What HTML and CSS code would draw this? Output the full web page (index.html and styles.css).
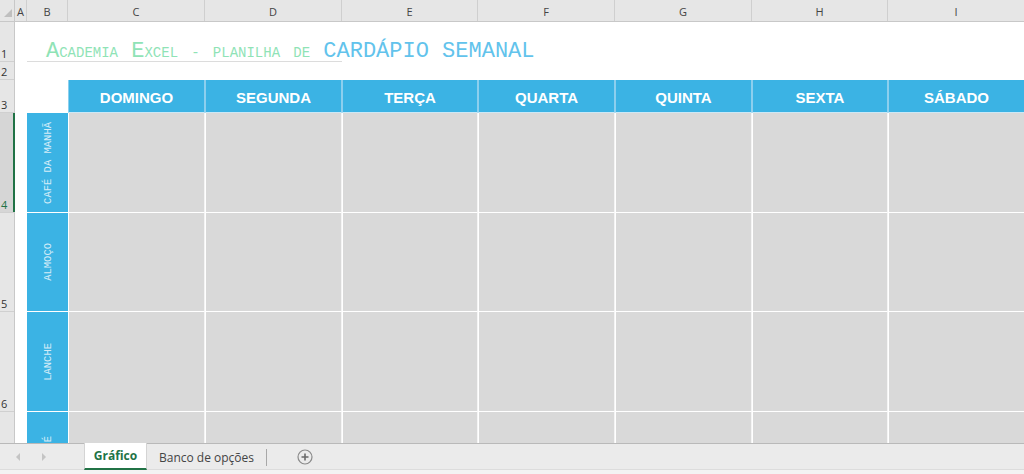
FILE: index.html
```html
<!DOCTYPE html>
<html lang="pt">
<head>
<meta charset="utf-8">
<title>Cardápio Semanal</title>
<link rel="stylesheet" href="styles.css">
</head>
<body>
<div class="app">
  <div class="colheads">
    <div class="ch corner">
      <svg width="10" height="10" viewBox="0 0 10 10"><polygon points="9,1 9,9 1,9" fill="#bfbfbf"/></svg>
    </div>
    <div class="ch w-a">A</div>
    <div class="ch w-b">B</div>
    <div class="ch w-137">C</div>
    <div class="ch w-137">D</div>
    <div class="ch w-136">E</div>
    <div class="ch w-137">F</div>
    <div class="ch w-137">G</div>
    <div class="ch w-136">H</div>
    <div class="ch w-rest">I</div>
  </div>
  <div class="main">
    <div class="rowheads">
      <div class="rh r1">1</div>
      <div class="rh r2">2</div>
      <div class="rh r3">3</div>
      <div class="rh r4 selected">4</div>
      <div class="rh r5">5</div>
      <div class="rh r6">6</div>
      <div class="rh r7">7</div>
    </div>
    <div class="sheet">
      <div class="blank"></div>
      <div class="title"><span class="t-small">A<span class="sc">cademia</span> E<span class="sc">xcel</span> <span class="sc">-</span> <span class="sc">planilha</span> <span class="sc">de</span></span> <span class="t-big">CARDÁPIO SEMANAL</span></div>
      <div class="blank"></div><div class="blank"></div><div class="blank"></div><div class="blank"></div><div class="blank"></div>

      <div class="blank"></div><div class="blank"></div><div class="blank"></div><div class="blank"></div><div class="blank"></div><div class="blank"></div><div class="blank"></div><div class="blank"></div><div class="blank"></div>

      <div class="blank"></div>
      <div class="blank"></div>
      <div class="day">DOMINGO</div>
      <div class="day">SEGUNDA</div>
      <div class="day">TERÇA</div>
      <div class="day">QUARTA</div>
      <div class="day">QUINTA</div>
      <div class="day">SEXTA</div>
      <div class="day">SÁBADO</div>

      <div class="blank"></div>
      <div class="meal"><span>CAFÉ DA MANHÃ</span></div>
      <div class="cell"></div><div class="cell"></div><div class="cell"></div><div class="cell"></div><div class="cell"></div><div class="cell"></div><div class="cell"></div>

      <div class="blank"></div>
      <div class="meal"><span>ALMOÇO</span></div>
      <div class="cell"></div><div class="cell"></div><div class="cell"></div><div class="cell"></div><div class="cell"></div><div class="cell"></div><div class="cell"></div>

      <div class="blank"></div>
      <div class="meal"><span>LANCHE</span></div>
      <div class="cell"></div><div class="cell"></div><div class="cell"></div><div class="cell"></div><div class="cell"></div><div class="cell"></div><div class="cell"></div>

      <div class="blank"></div>
      <div class="meal"><span>JANTAR É</span></div>
      <div class="cell"></div><div class="cell"></div><div class="cell"></div><div class="cell"></div><div class="cell"></div><div class="cell"></div><div class="cell"></div>
    </div>
  </div>
  <div class="tabbar">
    <div class="nav">
      <svg width="6" height="8" viewBox="0 0 6 8"><polygon points="5,0 5,8 1,4" fill="#c4c4c4"/></svg>
      <svg width="6" height="8" viewBox="0 0 6 8"><polygon points="1,0 1,8 5,4" fill="#c4c4c4"/></svg>
    </div>
    <div class="tab active">Gráfico</div>
    <div class="tab">Banco de opções</div>
    <div class="tabsep"></div>
    <div class="add">
      <svg width="16" height="16" viewBox="0 0 16 16"><circle cx="8" cy="8" r="7" fill="none" stroke="#8a8a8a" stroke-width="1.2"/><path d="M8 4.5v7M4.5 8h7" stroke="#6a6a6a" stroke-width="1.6"/></svg>
    </div>
  </div>
</div>
</body>
</html>
```

FILE: styles.css
```css
* { box-sizing: border-box; }
html, body { margin: 0; padding: 0; }
body {
  width: 1024px;
  height: 474px;
  overflow: hidden;
  background: #ffffff;
  font-family: "Open Sans", "Noto Sans", sans-serif;
}
.app {
  display: flex;
  flex-direction: column;
  height: 474px;
}

/* column headers */
.colheads {
  display: flex;
  height: 22px;
  flex: none;
  background: #e6e6e6;
  border-bottom: 1px solid #c8c8c8;
}
.ch {
  flex: none;
  display: flex;
  align-items: center;
  justify-content: center;
  font-size: 11px;
  color: #444;
  border-right: 1px solid #cfcfcf;
  padding-top: 2px;
}
.corner { width: 15px; border-right: 1px solid #c8c8c8; align-items: flex-end; justify-content: flex-end; padding: 0 1px 3px 0; }
.w-a { width: 12px; }
.w-b { width: 41px; }
.w-137 { width: 137px; }
.w-136 { width: 136px; }
.w-rest { flex: 1; border-right: none; }

/* main */
.main {
  display: flex;
  flex: none;
  height: 421px;
  overflow: hidden;
}
.rowheads {
  width: 15px;
  flex: none;
  background: #e6e6e6;
  border-right: 1px solid #c8c8c8;
  display: flex;
  flex-direction: column;
}
.rh {
  flex: none;
  font-size: 11px;
  color: #333;
  border-bottom: 1px solid #d0d0d0;
  display: flex;
  align-items: flex-end;
  padding: 0 0 0 1px;
  line-height: 15px;
}
.r1 { height: 40px; }
.r2 { height: 18px; }
.r3 { height: 33px; }
.r4 { height: 100px; }
.r5 { height: 99px; }
.r6 { height: 100px; }
.r7 { height: 100px; }
.rh.selected {
  background: #d6d6d6;
  color: #217346;
  box-shadow: inset -2px 0 0 #217346;
  margin-right: -1px;
}

.sheet {
  flex: 1;
  display: grid;
  grid-template-columns: 12px 41px 137px 137px 136px 137px 137px 136px 137px;
  grid-template-rows: 40px 18px 33px 100px 99px 100px 100px;
  align-content: start;
}

.title {
  grid-column: span 3;
  border-bottom: 1px solid #dcdcdc;
  white-space: nowrap;
  font-family: "Liberation Mono", "Courier New", monospace;
  font-size: 22px;
  line-height: 22px;
  padding: 19px 0 0 19px;
  overflow: visible;
  position: relative;
  z-index: 1;
}
.t-small {
  color: #8fe3b6;
}
.t-small .sc {
  font-size: 14px;
  text-transform: uppercase;
}
.t-big {
  color: #62c3ec;
}

.day {
  background: #3bb3e4;
  color: #ffffff;
  font-family: "Liberation Sans", Arial, sans-serif;
  font-weight: bold;
  font-size: 15px;
  display: flex;
  align-items: center;
  justify-content: center;
  border-left: 1px solid #8ccfee;
  border-right: 1px solid #8ccfee;
  border-bottom: 1px solid #cde8f5;
  padding-top: 2px;
}

.meal {
  background: #3bb3e4;
  border-bottom: 1px solid #ffffff;
  display: flex;
  align-items: center;
  justify-content: center;
}
.meal span {
  writing-mode: vertical-rl;
  transform: rotate(180deg);
  font-family: "Liberation Mono", "Courier New", monospace;
  font-size: 10.5px;
  color: #d4ecf8;
  white-space: nowrap;
}

.cell {
  background: #d9d9d9;
  border-left: 1px solid #ffffff;
  border-right: 1px solid #f4f4f4;
  border-bottom: 1px solid #ffffff;
}

/* tab bar */
.tabbar {
  flex: 1;
  display: flex;
  align-items: stretch;
  background: #ebebeb;
  border-top: 1px solid #b9b9b9;
  border-bottom: 4px solid #f3f3f3;
  box-shadow: inset 0 -1px 0 #dcdcdc;
}
.nav {
  width: 84px;
  display: flex;
  align-items: center;
  gap: 20px;
  padding-left: 15px;
}
.tab {
  display: flex;
  align-items: center;
  font-size: 12px;
  color: #444;
  padding: 0 12px;
}
.tab.active {
  width: 63px;
  justify-content: center;
  padding: 0;
  background: #ffffff;
  color: #217346;
  font-weight: bold;
  border-left: 1px solid #d4d4d4;
  border-right: 1px solid #d4d4d4;
  border-bottom: 2px solid #217346;
  margin-top: -1px;
}
.tabsep {
  width: 1px;
  background: #a8a8a8;
  margin: 5px 0 4px;
}
.add {
  display: flex;
  align-items: center;
  padding-left: 30px;
}
```
